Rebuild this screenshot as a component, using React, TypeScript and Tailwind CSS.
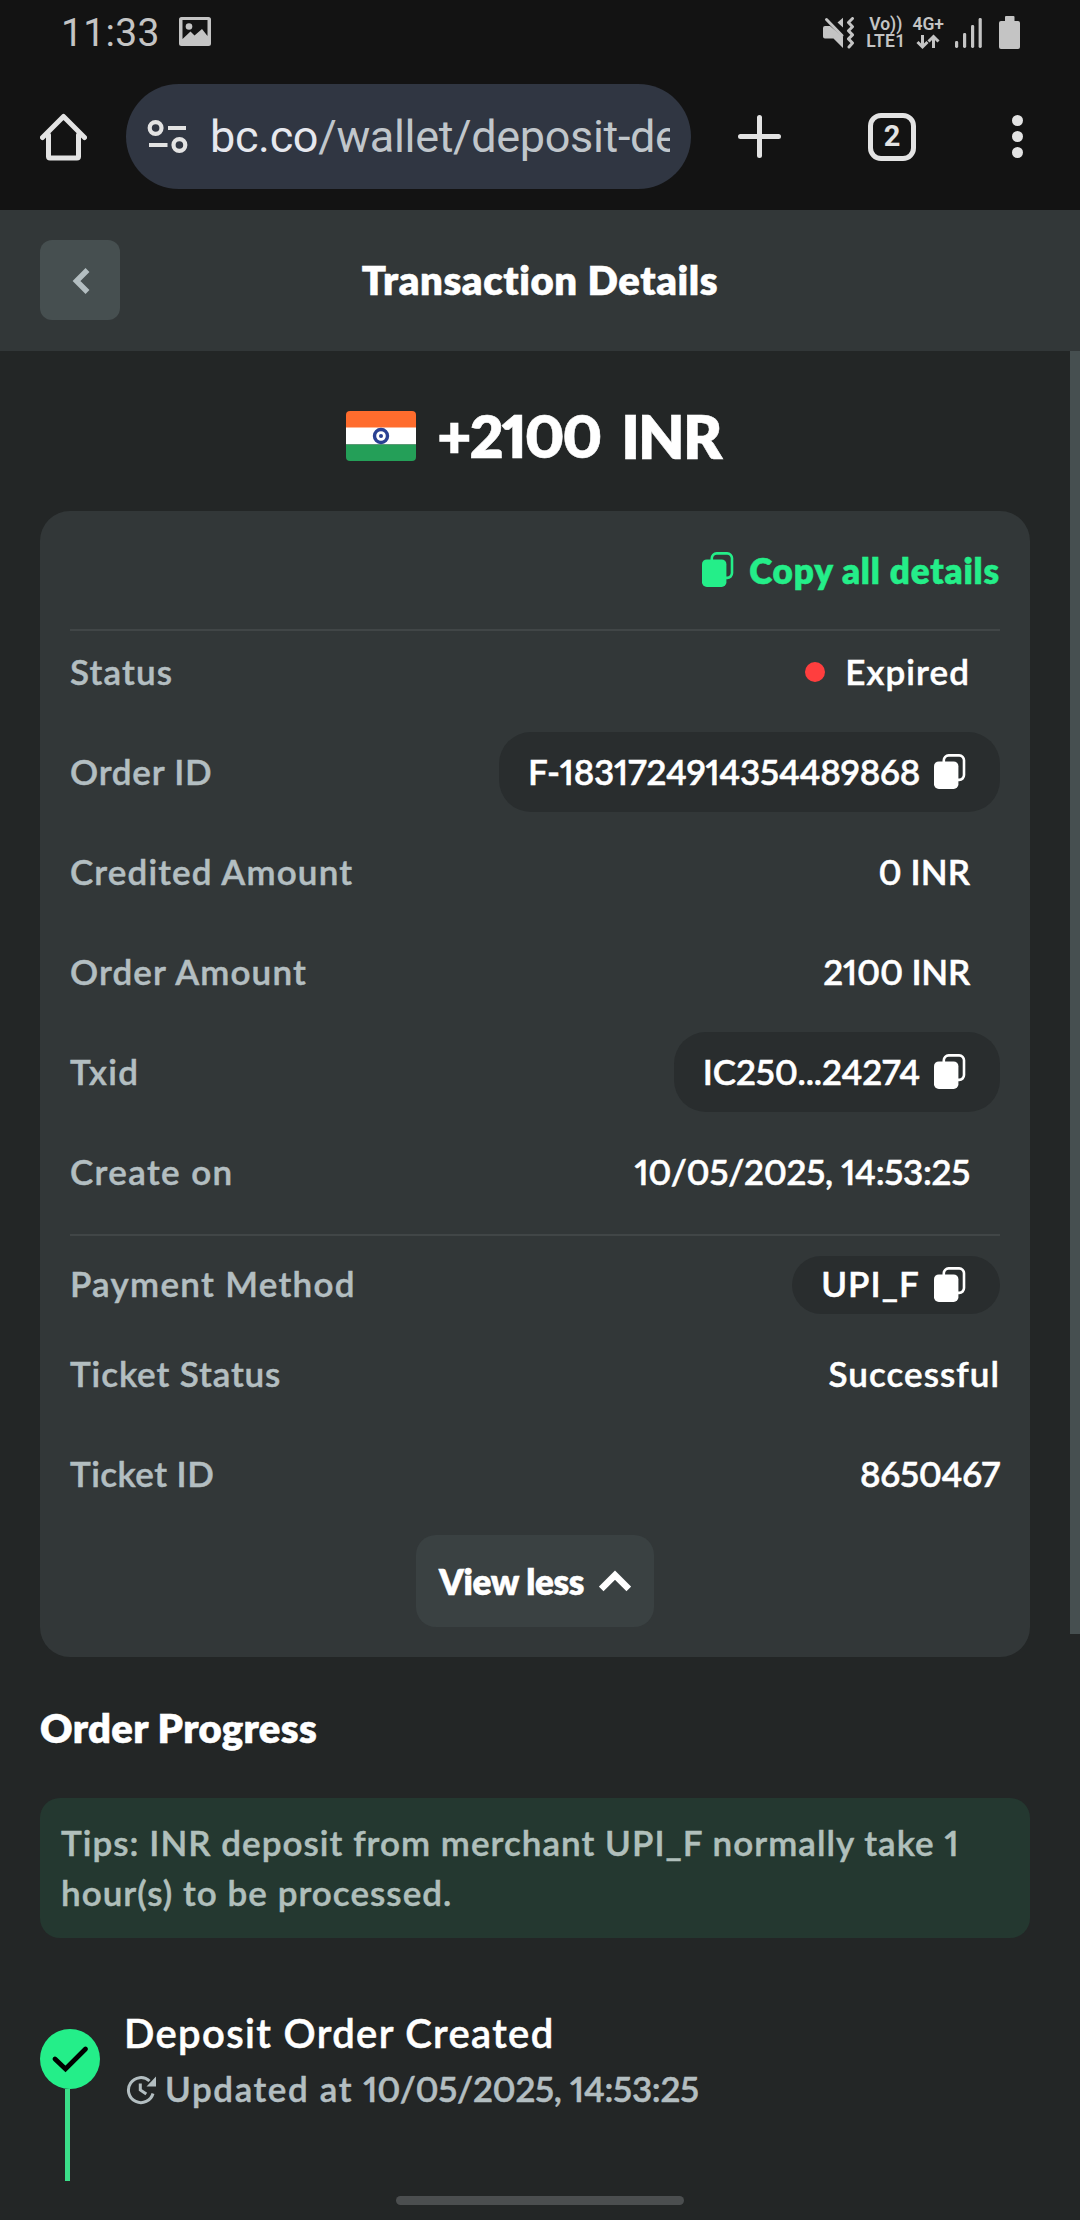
type Detail = {
  label: string;
  labelClass: string;
  value: string;
  valueClass: string;
  copy?: boolean;
  dot?: boolean;
};

const orderDetails: Detail[] = [
  { label: 'Status', labelClass: 'tracking-[1.2px]', value: 'Expired', valueClass: 'tracking-[1.1px]', dot: true },
  { label: 'Order ID', labelClass: 'tracking-[0.8px]', value: 'F-1831724914354489868', valueClass: 'tracking-[-0.24px]', copy: true },
  { label: 'Credited Amount', labelClass: 'tracking-[1.15px]', value: '0 INR', valueClass: 'tracking-[0.1px]' },
  { label: 'Order Amount', labelClass: 'tracking-[1.15px]', value: '2100 INR', valueClass: 'tracking-[-0.2px]' },
  { label: 'Txid', labelClass: 'tracking-[1.3px]', value: 'IC250...24274', valueClass: 'tracking-[-0.12px]', copy: true },
  { label: 'Create on', labelClass: 'tracking-[1.4px]', value: '10/05/2025, 14:53:25', valueClass: 'tracking-[-0.3px]' },
];

const ticketDetails: Detail[] = [
  { label: 'Ticket Status', labelClass: 'tracking-[0.9px]', value: 'Successful', valueClass: 'tracking-[1.05px]' },
  { label: 'Ticket ID', labelClass: 'tracking-[0.45px]', value: '8650467', valueClass: 'tracking-[-0.3px]' },
];

function CopyIcon() {
  return (
    <svg className="w-8 h-9 shrink-0" viewBox="0 0 32 36" fill="none">
      <path
        d="M9.8 9V6.2a4.8 4.8 0 0 1 4.8-4.8h10.6a4.8 4.8 0 0 1 4.8 4.8v14.9a4.8 4.8 0 0 1-4.8 4.8h-1.5"
        stroke="currentColor"
        strokeWidth="2.6"
      />
      <rect x="0" y="7.4" width="24.4" height="27.6" rx="4.8" fill="currentColor" />
    </svg>
  );
}

function StatusBar() {
  return (
    <div className="flex items-center h-[66px] pl-[61px] pr-[60px] text-[#c4c4c4] font-['Roboto',sans-serif]">
      <span className="text-[39px] leading-none tracking-[0.3px]">11:33</span>
      <svg className="w-8 h-[29px] ml-[19px] -mt-[3px]" viewBox="0 0 32 29" fill="currentColor">
        <path
          fillRule="evenodd"
          d="M2.5 0h27A2.5 2.5 0 0 1 32 2.5v24a2.5 2.5 0 0 1-2.5 2.5h-27A2.5 2.5 0 0 1 0 26.5v-24A2.5 2.5 0 0 1 2.5 0zM3.5 3v19l8-7.5 4 4L23 12l5.500 7V3z"
        />
        <circle cx="10" cy="9.5" r="3.3" />
      </svg>

      <svg className="w-8 h-8 ml-auto" viewBox="0 0 32 32" fill="currentColor">
        <path d="M2 9h5L20 20v11l-9.5-9.5H2q-2 0-2-2V11q0-2 2-2z" />
        <path d="M14.5 5.5L20 .8v9.7z" />
        <path d="M3.5 2.5L19 18.5" stroke="currentColor" strokeWidth="3" strokeLinecap="round" />
        <path
          d="M29.5 1.5l-4 4 4 4.2-4 4 4 4.2-4 4 4 4.1-3.5 4"
          fill="none"
          stroke="currentColor"
          strokeWidth="3"
          strokeLinejoin="round"
          strokeLinecap="round"
        />
      </svg>
      <div className="flex flex-col items-center ml-[11px] text-[17.5px] leading-[17px] font-semibold">
        <span>Vo))</span>
        <span className="tracking-[0.3px]">LTE1</span>
      </div>
      <div className="flex flex-col items-center ml-[7px] text-[17.5px] leading-[17px] font-semibold">
        <span>4G+</span>
        <svg className="w-6 h-[17px]" viewBox="0 0 24 17" fill="none" stroke="currentColor" strokeWidth="3">
          <path d="M6.5 2v11.5M1.5 9l5 5 5-5M17.5 15V3.5M12.5 8.5l5-5 5 5" />
        </svg>
      </div>
      <svg className="w-[27px] h-8 ml-[11px]" viewBox="0 0 27 32" fill="currentColor">
        <rect x="0" y="24" width="3.2" height="7" rx="1.4" />
        <rect x="8" y="16" width="3.2" height="15" rx="1.4" />
        <rect x="16" y="8" width="3.2" height="23" rx="1.4" />
        <rect x="23.6" y="1" width="3.2" height="30" rx="1.4" />
      </svg>
      <svg className="w-[21px] h-[33px] ml-[17px] -mt-[2px]" viewBox="0 0 21 33" fill="currentColor">
        <rect x="6" y="0" width="9.5" height="8" rx="1" />
        <rect x="0" y="5" width="21" height="28" rx="2" />
      </svg>
    </div>
  );
}

function BrowserBar() {
  return (
    <div className="flex items-center h-36 pb-[3px] pl-10 text-[#e3e3e3] font-['Roboto',sans-serif]">
      <svg className="w-[47px] h-12 shrink-0" viewBox="0 0 47 48" fill="none" stroke="currentColor" strokeWidth="5" strokeLinejoin="round" strokeLinecap="round">
        <path d="M2.5 24.5L23.5 3.5l21 21" />
        <path d="M8.5 22v21.5q0 1.5 1.5 1.5h27q1.5 0 1.5-1.5V22" />
      </svg>
      <div className="flex items-center w-[565px] h-[105px] ml-[39px] px-[21px] rounded-full bg-[#303642] shrink-0">
        <svg className="w-[41px] h-[35px] shrink-0" viewBox="0 0 41 35" fill="none" stroke="currentColor" strokeWidth="4.2">
          <circle cx="8.6" cy="9" r="5.9" />
          <path d="M21 9h18M2 26h18.5" />
          <circle cx="32.4" cy="26" r="5.9" />
        </svg>
        <div className="flex-1 ml-[22px] mt-px overflow-hidden whitespace-nowrap text-[45px] leading-[54px] tracking-[-0.35px] text-[#c0c6cb]">
          <span className="text-[#e6e8ee]">bc.co</span>/wallet/deposit-details
        </div>
      </div>
      <svg className="w-[43px] h-[43px] ml-[47px] shrink-0" viewBox="0 0 43 43" stroke="currentColor" strokeWidth="5" strokeLinecap="round">
        <path d="M21.5 2.5v38M2.5 21.5h38" />
      </svg>
      <div className="flex items-center justify-center w-12 h-12 ml-[87px] shrink-0 rounded-[13px] border-[5px] border-[#e3e3e3] text-[29px] leading-none font-bold">
        2
      </div>
      <div className="flex flex-col gap-[5px] ml-[96px] shrink-0">
        <span className="w-[11px] h-[11px] rounded-full bg-[#e3e3e3]" />
        <span className="w-[11px] h-[11px] rounded-full bg-[#e3e3e3]" />
        <span className="w-[11px] h-[11px] rounded-full bg-[#e3e3e3]" />
      </div>
    </div>
  );
}

function PageHeader() {
  return (
    <header className="flex items-center h-[141px] pb-px pl-10 pr-[120px] bg-[#323738] shrink-0">
      <button className="flex items-center justify-center w-20 h-20 rounded-xl bg-[#464f50]">
        <svg className="w-[18px] h-[26px] ml-[2px] mt-[2px]" viewBox="0 0 18 26" fill="none" stroke="#b3bec1" strokeWidth="5.5">
          <path d="M15.5 2L4.5 13l11 11" />
        </svg>
      </button>
      <h1 className="flex-1 text-center text-[40px] leading-[50px] font-extrabold tracking-[0.6px]">Transaction Details</h1>
    </header>
  );
}

function Flag() {
  return (
    <svg className="w-[70px] h-[50px]" viewBox="0 0 70 50">
      <clipPath id="flag">
        <rect width="70" height="50" rx="4" />
      </clipPath>
      <g clipPath="url(#flag)">
        <rect width="70" height="17" fill="#ff6c2d" />
        <rect y="16.5" width="70" height="17" fill="#fff" />
        <rect y="33.5" width="70" height="17" fill="#249f58" />
      </g>
      <circle cx="35" cy="25" r="6.5" fill="none" stroke="#2a4193" strokeWidth="3.4" />
      <circle cx="35" cy="25" r="2" fill="#2a4193" />
    </svg>
  );
}

function DetailRow({ item, flush }: { item: Detail; flush?: boolean }) {
  return (
    <div className="flex items-center justify-between h-20">
      <span className={`pb-[3px] text-[#b3bec1] ${item.labelClass}`}>{item.label}</span>
      {item.copy ? (
        <div className="flex items-center gap-[14px] h-20 pl-[29px] pr-[34px] rounded-[32px] bg-[#292d2e]">
          <span className={`pb-0.5 ${item.valueClass}`}>{item.value}</span>
          <CopyIcon />
        </div>
      ) : (
        <div className={`flex items-center gap-5 ${flush ? '' : 'pr-[30px]'}`}>
          {item.dot && <span className="w-5 h-5 rounded-full bg-[#ff3e3e]" />}
          <span className={`pb-[3px] ${item.valueClass}`}>{item.value}</span>
        </div>
      )}
    </div>
  );
}

function DetailsCard() {
  return (
    <section className="px-[30px] pb-[30px] rounded-[30px] bg-[#323738]">
      <div className="flex items-center justify-end h-[118px] gap-[15px] text-[#24ee89]">
        <CopyIcon />
        <span className="font-extrabold tracking-[0.85px]">Copy all details</span>
      </div>
      <hr className="h-0.5 border-0 bg-[#414647]" />
      <div className="flex flex-col gap-5 mt-px">
        {orderDetails.map((item) => (
          <DetailRow key={item.label} item={item} />
        ))}
      </div>
      <hr className="h-0.5 mt-[22px] border-0 bg-[#414647]" />
      <div className="flex items-center justify-between h-[58px] mt-5">
        <span className="pb-1 text-[#b3bec1] tracking-[1.3px]">Payment Method</span>
        <div className="flex items-center gap-[14px] h-[58px] pl-[29px] pr-[34px] rounded-full bg-[#292d2e]">
          <span className="pb-1 tracking-[1.1px]">UPI_F</span>
          <CopyIcon />
        </div>
      </div>
      <div className="flex flex-col gap-5 mt-5">
        {ticketDetails.map((item) => (
          <DetailRow key={item.label} item={item} flush />
        ))}
      </div>
      <div className="flex justify-center mt-[21px]">
        <button className="flex items-center justify-center gap-[15px] w-[238px] h-[92px] rounded-[20px] bg-[#3a4142]">
          <span className="font-extrabold tracking-[-0.3px]">View less</span>
          <svg className="w-8 h-[22px]" viewBox="0 0 32 22" fill="none" stroke="currentColor" strokeWidth="6.6">
            <path d="M2.2 19L16 5.200l13.8 13.8" />
          </svg>
        </button>
      </div>
    </section>
  );
}

function OrderProgress() {
  return (
    <section>
      <h2 className="flex items-center h-[141px] text-[40px] leading-[50px] font-extrabold tracking-[0.36px]">Order Progress</h2>
      <p className="pt-[19px] pb-[21px] pl-[21px] pr-5 rounded-[20px] bg-[#243830] text-[#b0bfbb] tracking-[1.04px]">
        Tips: INR deposit from merchant UPI_F normally take 1 hour(s) to be processed.
      </p>
      <div className="flex mt-[66px]">
        <div className="w-[60px] pt-[25px]">
          <svg className="w-[60px] h-[60px]" viewBox="0 0 60 60">
            <circle cx="30" cy="30" r="30" fill="#24ee89" />
            <path d="M15 30l10.5 10L45.5 20" fill="none" stroke="#000" strokeWidth="4.8" strokeLinecap="round" />
          </svg>
          <div className="w-[5px] h-[92px] ml-[25px] bg-[#3bde89]" />
        </div>
        <div className="ml-6 pt-px">
          <h3 className="text-[40px] leading-[56px] tracking-[1.35px]">Deposit Order Created</h3>
          <div className="flex items-center gap-[9px] mt-0.5 ml-0.5 text-[#b3bec1]">
            <svg className="w-[30px] h-[30px] mt-1" viewBox="0 0 30 30" fill="none" stroke="currentColor" strokeWidth="3">
              <path d="M27 18.5A12.5 12.5 0 1 1 23.5 6" />
              <path d="M14.3 8.5V15l6 4" />
              <path d="M20.5 11.5H30V1.5z" fill="currentColor" stroke="none" />
            </svg>
            <span className="tracking-[-0.3px]">
              <span className="tracking-[1.6px]">Updated at </span>10/05/2025, 14:53:25
            </span>
          </div>
        </div>
      </div>
    </section>
  );
}

export default function App() {
  return (
    <div className="relative flex flex-col w-[1080px] h-[2220px] overflow-hidden bg-[#232626] text-white">
      <div className="bg-[#131313] shrink-0">
        <StatusBar />
        <BrowserBar />
      </div>
      <div className="text-[35px] leading-[50px] font-semibold proportional-nums font-['Lato',sans-serif] [-webkit-text-stroke-width:0.5px]">
        <PageHeader />
        <div className="flex items-start">
          <main className="flex-1 px-10">
            <div className="flex items-center justify-center h-[160px] pt-[10px] pr-[3px]">
              <Flag />
              <span className="ml-[21px] text-[59px] font-extrabold tracking-[-2px]">+2100</span>
              <span className="ml-[21px] text-[60px] font-extrabold tracking-[-1.7px]">INR</span>
            </div>
            <DetailsCard />
            <OrderProgress />
          </main>
          {/* scrollbar thumb */}
          <div className="w-[10px] h-[1283px] bg-[#464f50]" />
        </div>
      </div>
      {/* system gesture bar */}
      <div className="absolute left-[396px] bottom-[15px] w-[288px] h-[9px] rounded-full bg-[#4b4e4f]" />
    </div>
  );
}
